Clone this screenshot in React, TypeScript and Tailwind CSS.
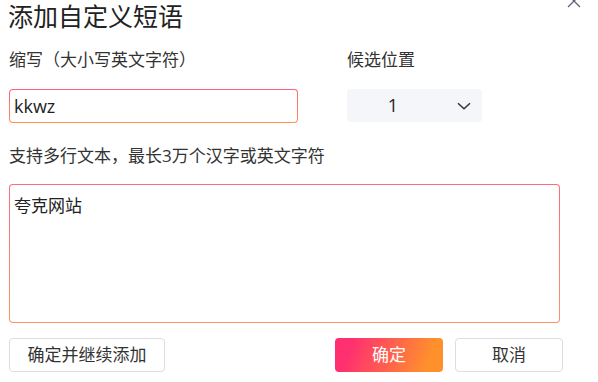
import React from "react";

export default function App() {
  const font = "font-['Open_Sans','Noto_Sans_CJK_SC',sans-serif]";
  return (
    <div className={`relative w-[598px] h-[382px] overflow-hidden bg-white text-[#333] ${font}`}>
      <svg
        className="absolute left-[567px] top-[-6px]"
        width="14"
        height="14"
        viewBox="0 0 14 14"
        fill="none"
        stroke="#5c6276"
        strokeWidth="1.3"
      >
        <path d="M1 1L13 13M13 1L1 13" />
      </svg>

      <div className="pl-[9px] pt-[1px]">
        <h1 className="h-[30px] text-[25px] leading-[30px] text-[#222] -ml-px">添加自定义短语</h1>

        <div className="flex mt-[17px]">
          <div className="w-[289px]">
            <div className="h-[24px] text-[17px] leading-[24px]">缩写（大小写英文字符）</div>
            <div className="mt-[17px] h-[34px] rounded-[4px] bg-[linear-gradient(to_bottom,#ff6179,#ff8f52)] p-px">
              <div className="h-full rounded-[3px] bg-white pl-[4px] flex items-center text-[18px] text-[#222]">
                kkwz
              </div>
            </div>
          </div>
          <div className="ml-[49px] w-[135px]">
            <div className="h-[24px] text-[17px] leading-[24px]">候选位置</div>
            <div className="mt-[17px] h-[33px] rounded-[4px] bg-[#f4f6fa] flex items-center">
              <span className="w-[92px] text-center text-[18px] text-[#222]">1</span>
              <svg className="ml-[18px]" width="14" height="8" viewBox="0 0 14 8" fill="none" stroke="#333" strokeWidth="1.5">
                <path d="M1 1.2L7 6.8L13 1.2" />
              </svg>
            </div>
          </div>
        </div>

        <div className="mt-[21px] h-[24px] text-[17px] leading-[24px]">支持多行文本，最长3万个汉字或英文字符</div>

        <div className="mt-[16px] w-[551px] h-[139px] rounded-[4px] bg-[linear-gradient(to_bottom,#ff6a7c,#ff9266)] p-px">
          <div className="h-full rounded-[3px] bg-white pl-[4px] pt-[9px] text-[17px] leading-[24px] text-[#222]">
            夸克网站
          </div>
        </div>

        <div className="mt-[15px] flex">
          <button className="w-[156px] h-[34px] rounded-[4px] border border-[#dcdde3] bg-white text-[17px] text-[#333]">
            确定并继续添加
          </button>
          <button className="ml-[170px] w-[108px] h-[34px] rounded-[4px] bg-[linear-gradient(110deg,#ff2f70_15%,#ff902c_85%)] text-[17px] text-white">
            确定
          </button>
          <button className="ml-[12px] w-[108px] h-[34px] rounded-[4px] border border-[#dcdde3] bg-white text-[17px] text-[#333]">
            取消
          </button>
        </div>
      </div>
    </div>
  );
}
